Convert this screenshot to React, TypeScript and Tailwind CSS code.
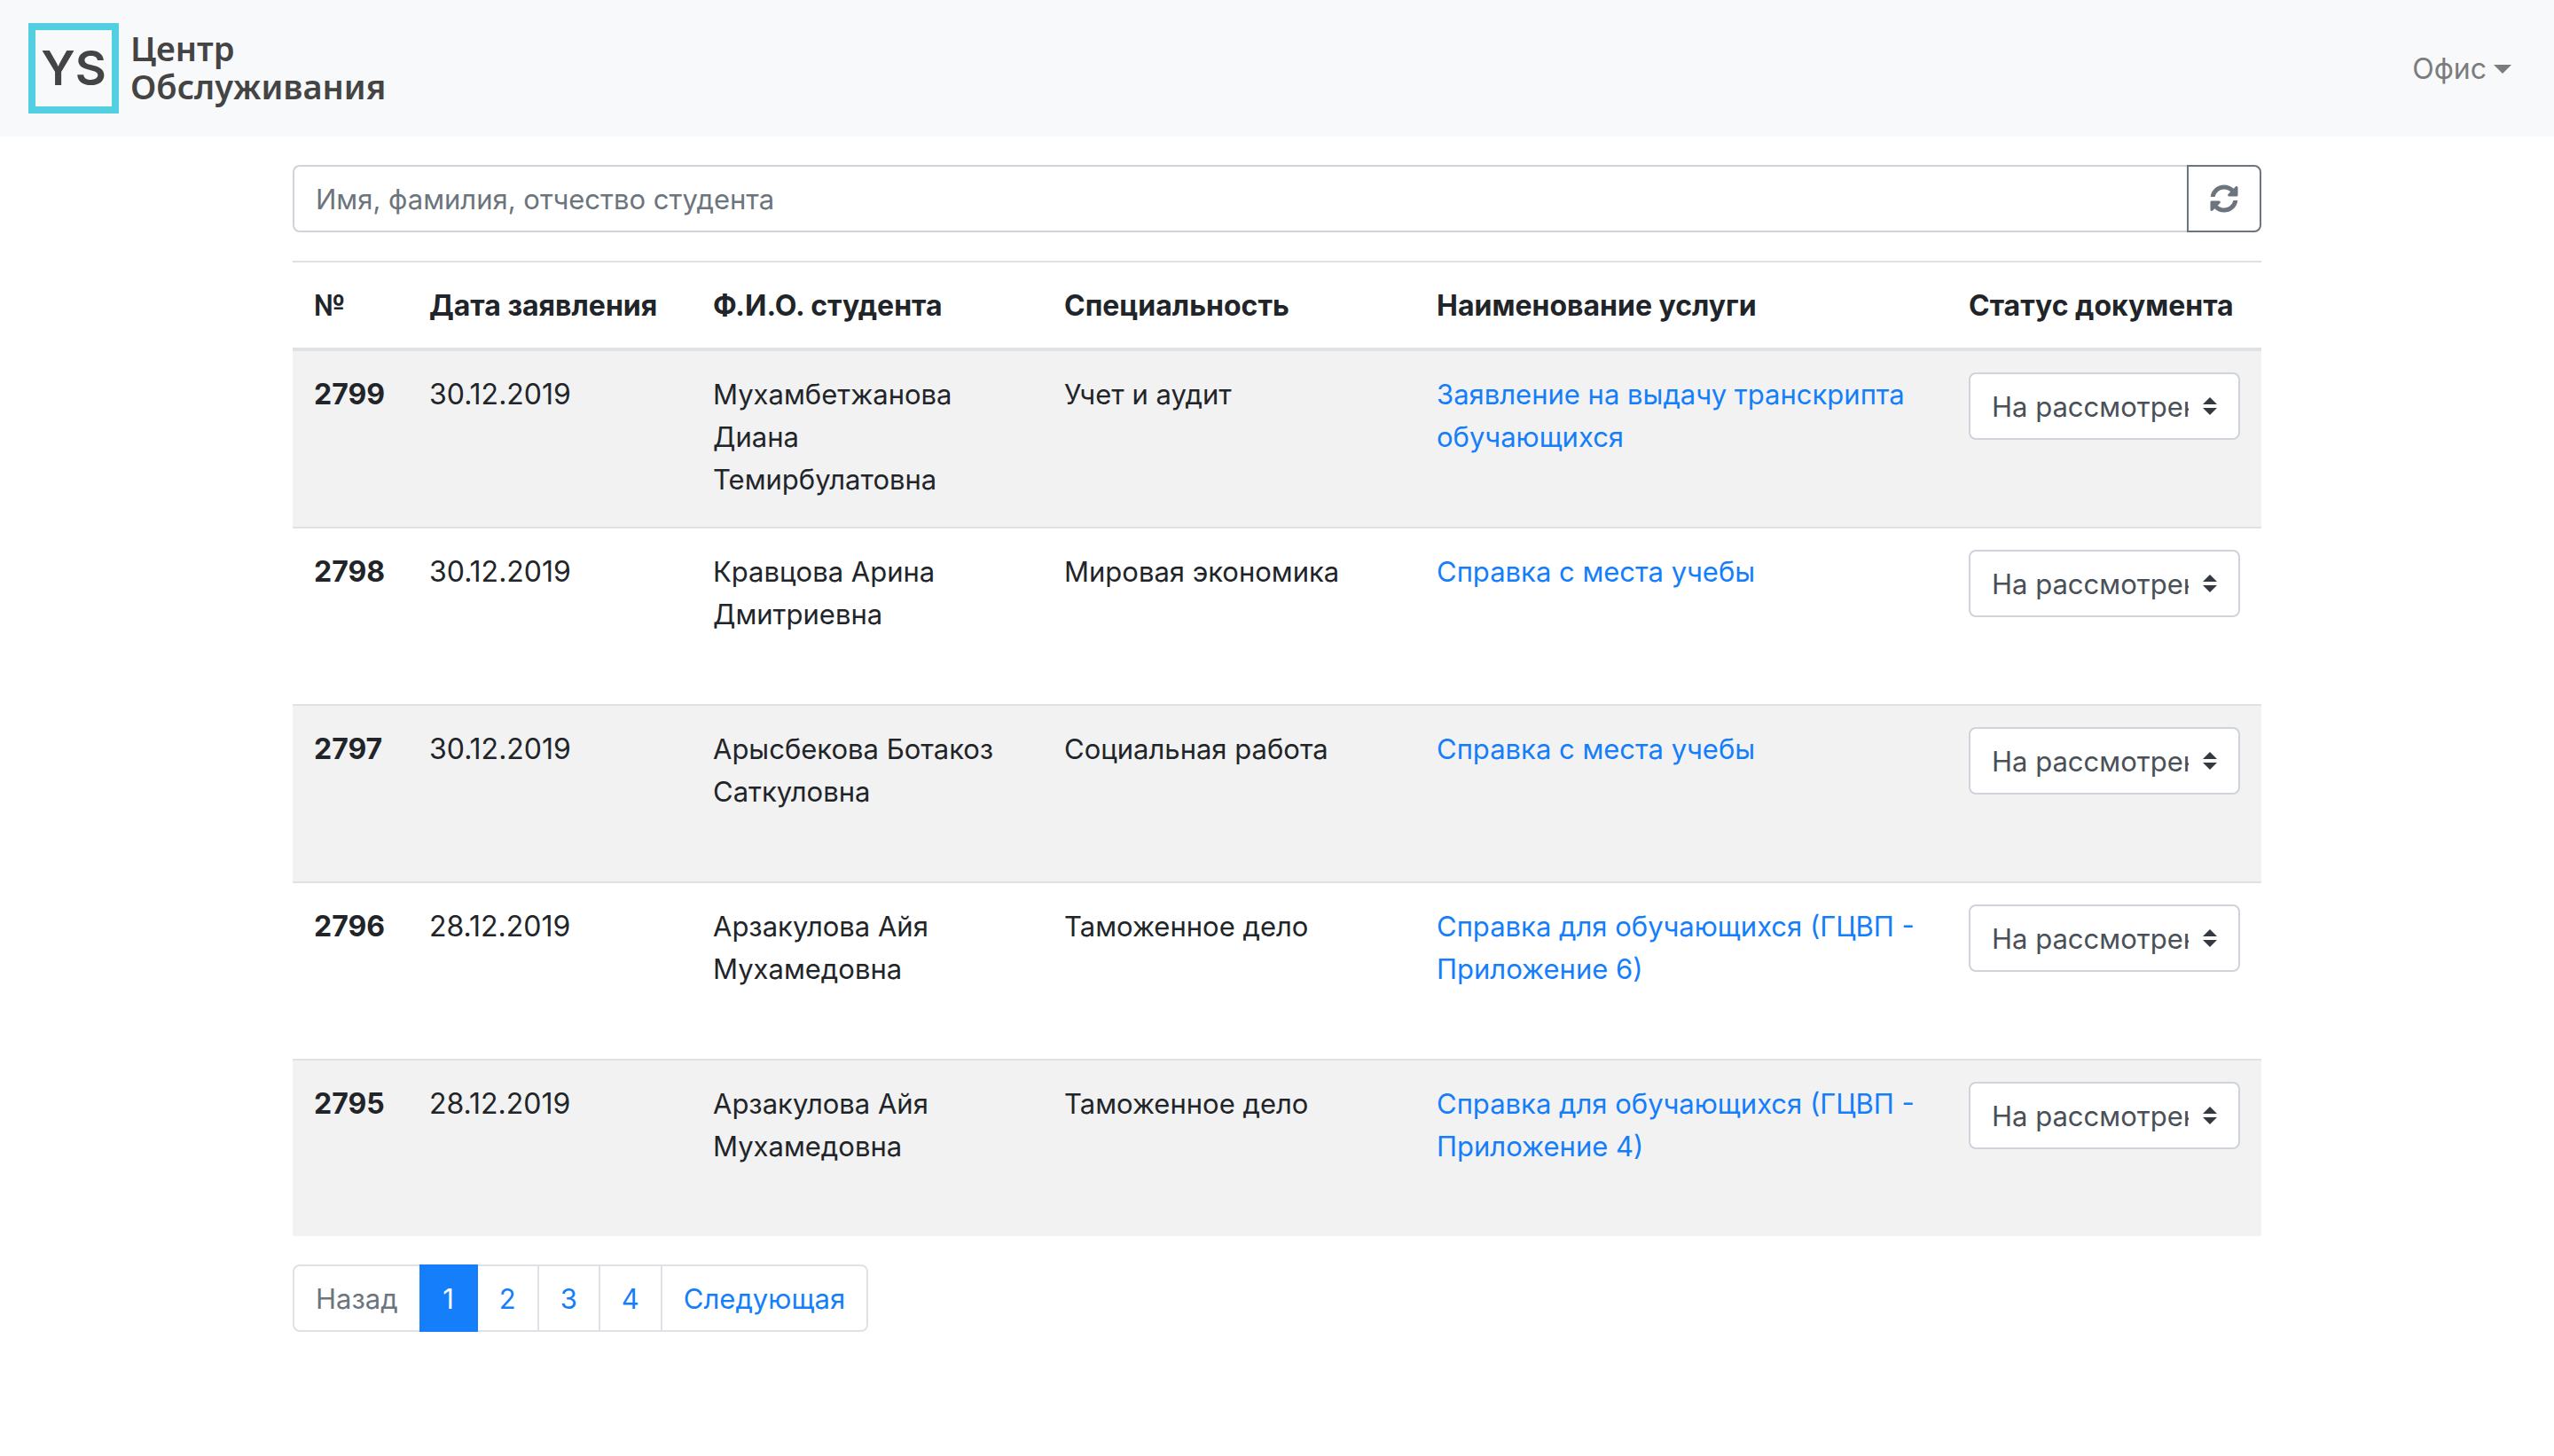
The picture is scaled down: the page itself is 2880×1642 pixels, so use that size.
import { FaSyncAlt } from "react-icons/fa";

type Application = {
  id: number;
  date: string;
  student: string;
  specialty: string;
  service: string;
};

const applications: Application[] = [
  {
    id: 2799,
    date: "30.12.2019",
    student: "Мухамбетжанова Диана Темирбулатовна",
    specialty: "Учет и аудит",
    service: "Заявление на выдачу транскрипта обучающихся",
  },
  {
    id: 2798,
    date: "30.12.2019",
    student: "Кравцова Арина Дмитриевна",
    specialty: "Мировая экономика",
    service: "Справка с места учебы",
  },
  {
    id: 2797,
    date: "30.12.2019",
    student: "Арысбекова Ботакоз Саткуловна",
    specialty: "Социальная работа",
    service: "Справка с места учебы",
  },
  {
    id: 2796,
    date: "28.12.2019",
    student: "Арзакулова Айя Мухамедовна",
    specialty: "Таможенное дело",
    service: "Справка для обучающихся (ГЦВП - Приложение 6)",
  },
  {
    id: 2795,
    date: "28.12.2019",
    student: "Арзакулова Айя Мухамедовна",
    specialty: "Таможенное дело",
    service: "Справка для обучающихся (ГЦВП - Приложение 4)",
  },
];

const columns = [
  { title: "№", width: "w-[130px]" },
  { title: "Дата заявления", width: "w-[320px]" },
  { title: "Ф.И.О. студента", width: "w-[396px]" },
  { title: "Специальность", width: "w-[420px]" },
  { title: "Наименование услуги", width: "" },
  { title: "Статус документа", width: "w-[354px]" },
];

function Header() {
  return (
    <header className="flex items-center justify-between bg-[#f8f9fb] py-[26px] pl-8 pr-12">
      <a href="#" className="flex items-center gap-[13px] text-[#444444]">
        <span className="flex size-[102px] items-center justify-center border-8 border-[#52cfe1] font-['Inter',sans-serif] text-[54px] font-semibold leading-none">
          YS
        </span>
        <span className="flex flex-col pb-[2px] font-['Noto_Sans',sans-serif] text-[38px] font-semibold leading-[43px]">
          <span>Центр</span>
          <span>Обслуживания</span>
        </span>
      </a>
      <button type="button" className="flex items-center gap-2 pt-[2px] text-[32px] text-[#7c7c7d]">
        Офис
        <svg viewBox="0 0 20 10" className="h-[10px] w-5" fill="currentColor" aria-hidden="true">
          <path d="M0 0h20L10 10z" />
        </svg>
      </button>
    </header>
  );
}

function SearchBar() {
  return (
    <form className="flex h-[76px]" onSubmit={(e) => e.preventDefault()}>
      <input
        type="text"
        aria-label="Имя, фамилия, отчество студента"
        placeholder="Имя, фамилия, отчество студента"
        className="min-w-0 flex-1 rounded-l-lg border-2 border-r-0 border-[#ced4da] bg-white px-6 pt-[2px] text-[#495057] outline-none placeholder:text-[#6c757d]"
      />
      <button
        type="submit"
        aria-label="Обновить"
        className="flex w-[84px] items-center justify-center rounded-r-lg border-2 border-[#6c757d] text-[#6c757d]"
      >
        <FaSyncAlt className="size-8" />
      </button>
    </form>
  );
}

function StatusSelect({ id }: { id: number }) {
  return (
    <div className="relative">
      <select
        aria-label={`Статус документа ${id}`}
        className="block h-[76px] w-full appearance-none overflow-hidden rounded-lg border-2 border-[#ced4da] bg-white pl-6 pr-14 pt-[2px] text-[#495057] outline-none"
      >
        <option>На рассмотрении</option>
      </select>
      <svg
        viewBox="0 0 4 5"
        className="pointer-events-none absolute right-[26px] top-7 h-5 w-4"
        fill="#343a40"
        aria-hidden="true"
      >
        <path d="M2 0L0 2h4zm0 5L0 3h4z" />
      </svg>
    </div>
  );
}

function ApplicationsTable() {
  return (
    <table className="w-full table-fixed border-separate border-spacing-0 text-left">
      <thead>
        <tr>
          {columns.map((c) => (
            <th
              key={c.title}
              scope="col"
              className={`border-b-4 border-t-2 border-[#dee2e6] px-6 pb-[23px] pt-[25px] text-[32px] leading-[48px] font-bold whitespace-nowrap ${c.width}`}
            >
              {c.title}
            </th>
          ))}
        </tr>
      </thead>
      <tbody className="[&>tr:first-child>*]:h-[198px] [&>tr:not(:first-child)>*]:h-[200px] [&>tr:not(:first-child)>*]:border-t-2">
        {applications.map((a) => (
          <tr
            key={a.id}
            className="align-top odd:bg-[#f2f2f2] [&>*]:border-[#dee2e6] [&>*]:px-6 [&>*]:pt-[25px] [&>*:last-child]:pt-6"
          >
            <th scope="row" className="text-[32px] leading-[48px] font-bold">
              {a.id}
            </th>
            <td className="text-[32px] leading-[48px]">{a.date}</td>
            <td>{a.student}</td>
            <td>{a.specialty}</td>
            <td>
              <a href="#" className="text-[#147efb]">
                {a.service}
              </a>
            </td>
            <td>
              <StatusSelect id={a.id} />
            </td>
          </tr>
        ))}
      </tbody>
    </table>
  );
}

function Pagination() {
  const item = "block border-y-2 border-r-2 border-[#dee2e6] px-6 pt-[13px] pb-[11px]";
  return (
    <nav aria-label="Страницы">
      <ul className="flex text-[#147efb]">
        <li>
          <span className="block rounded-l-lg border-y-2 border-l-2 border-[#dee2e6] px-6 pt-[13px] pb-[11px] text-[#6c757d]">
            Назад
          </span>
        </li>
        <li>
          <a
            href="#"
            aria-current="page"
            className="block min-w-[66px] border-2 border-[#147efb] bg-[#147efb] px-6 pt-[13px] pb-[11px] text-center text-white"
          >
            1
          </a>
        </li>
        {["2", "3", "4"].map((n) => (
          <li key={n}>
            <a href="#" className={`${item} min-w-[69px] text-center`}>
              {n}
            </a>
          </li>
        ))}
        <li>
          <a href="#" className={`${item} rounded-r-lg`}>
            Следующая
          </a>
        </li>
      </ul>
    </nav>
  );
}

export default function App() {
  return (
    <div className="min-h-screen bg-white font-['Inter',sans-serif] text-[31px] leading-[48px] text-[#212529]">
      <Header />
      <main className="mx-auto flex max-w-[2220px] flex-col gap-8 pt-8">
        <SearchBar />
        <ApplicationsTable />
        <Pagination />
      </main>
    </div>
  );
}
